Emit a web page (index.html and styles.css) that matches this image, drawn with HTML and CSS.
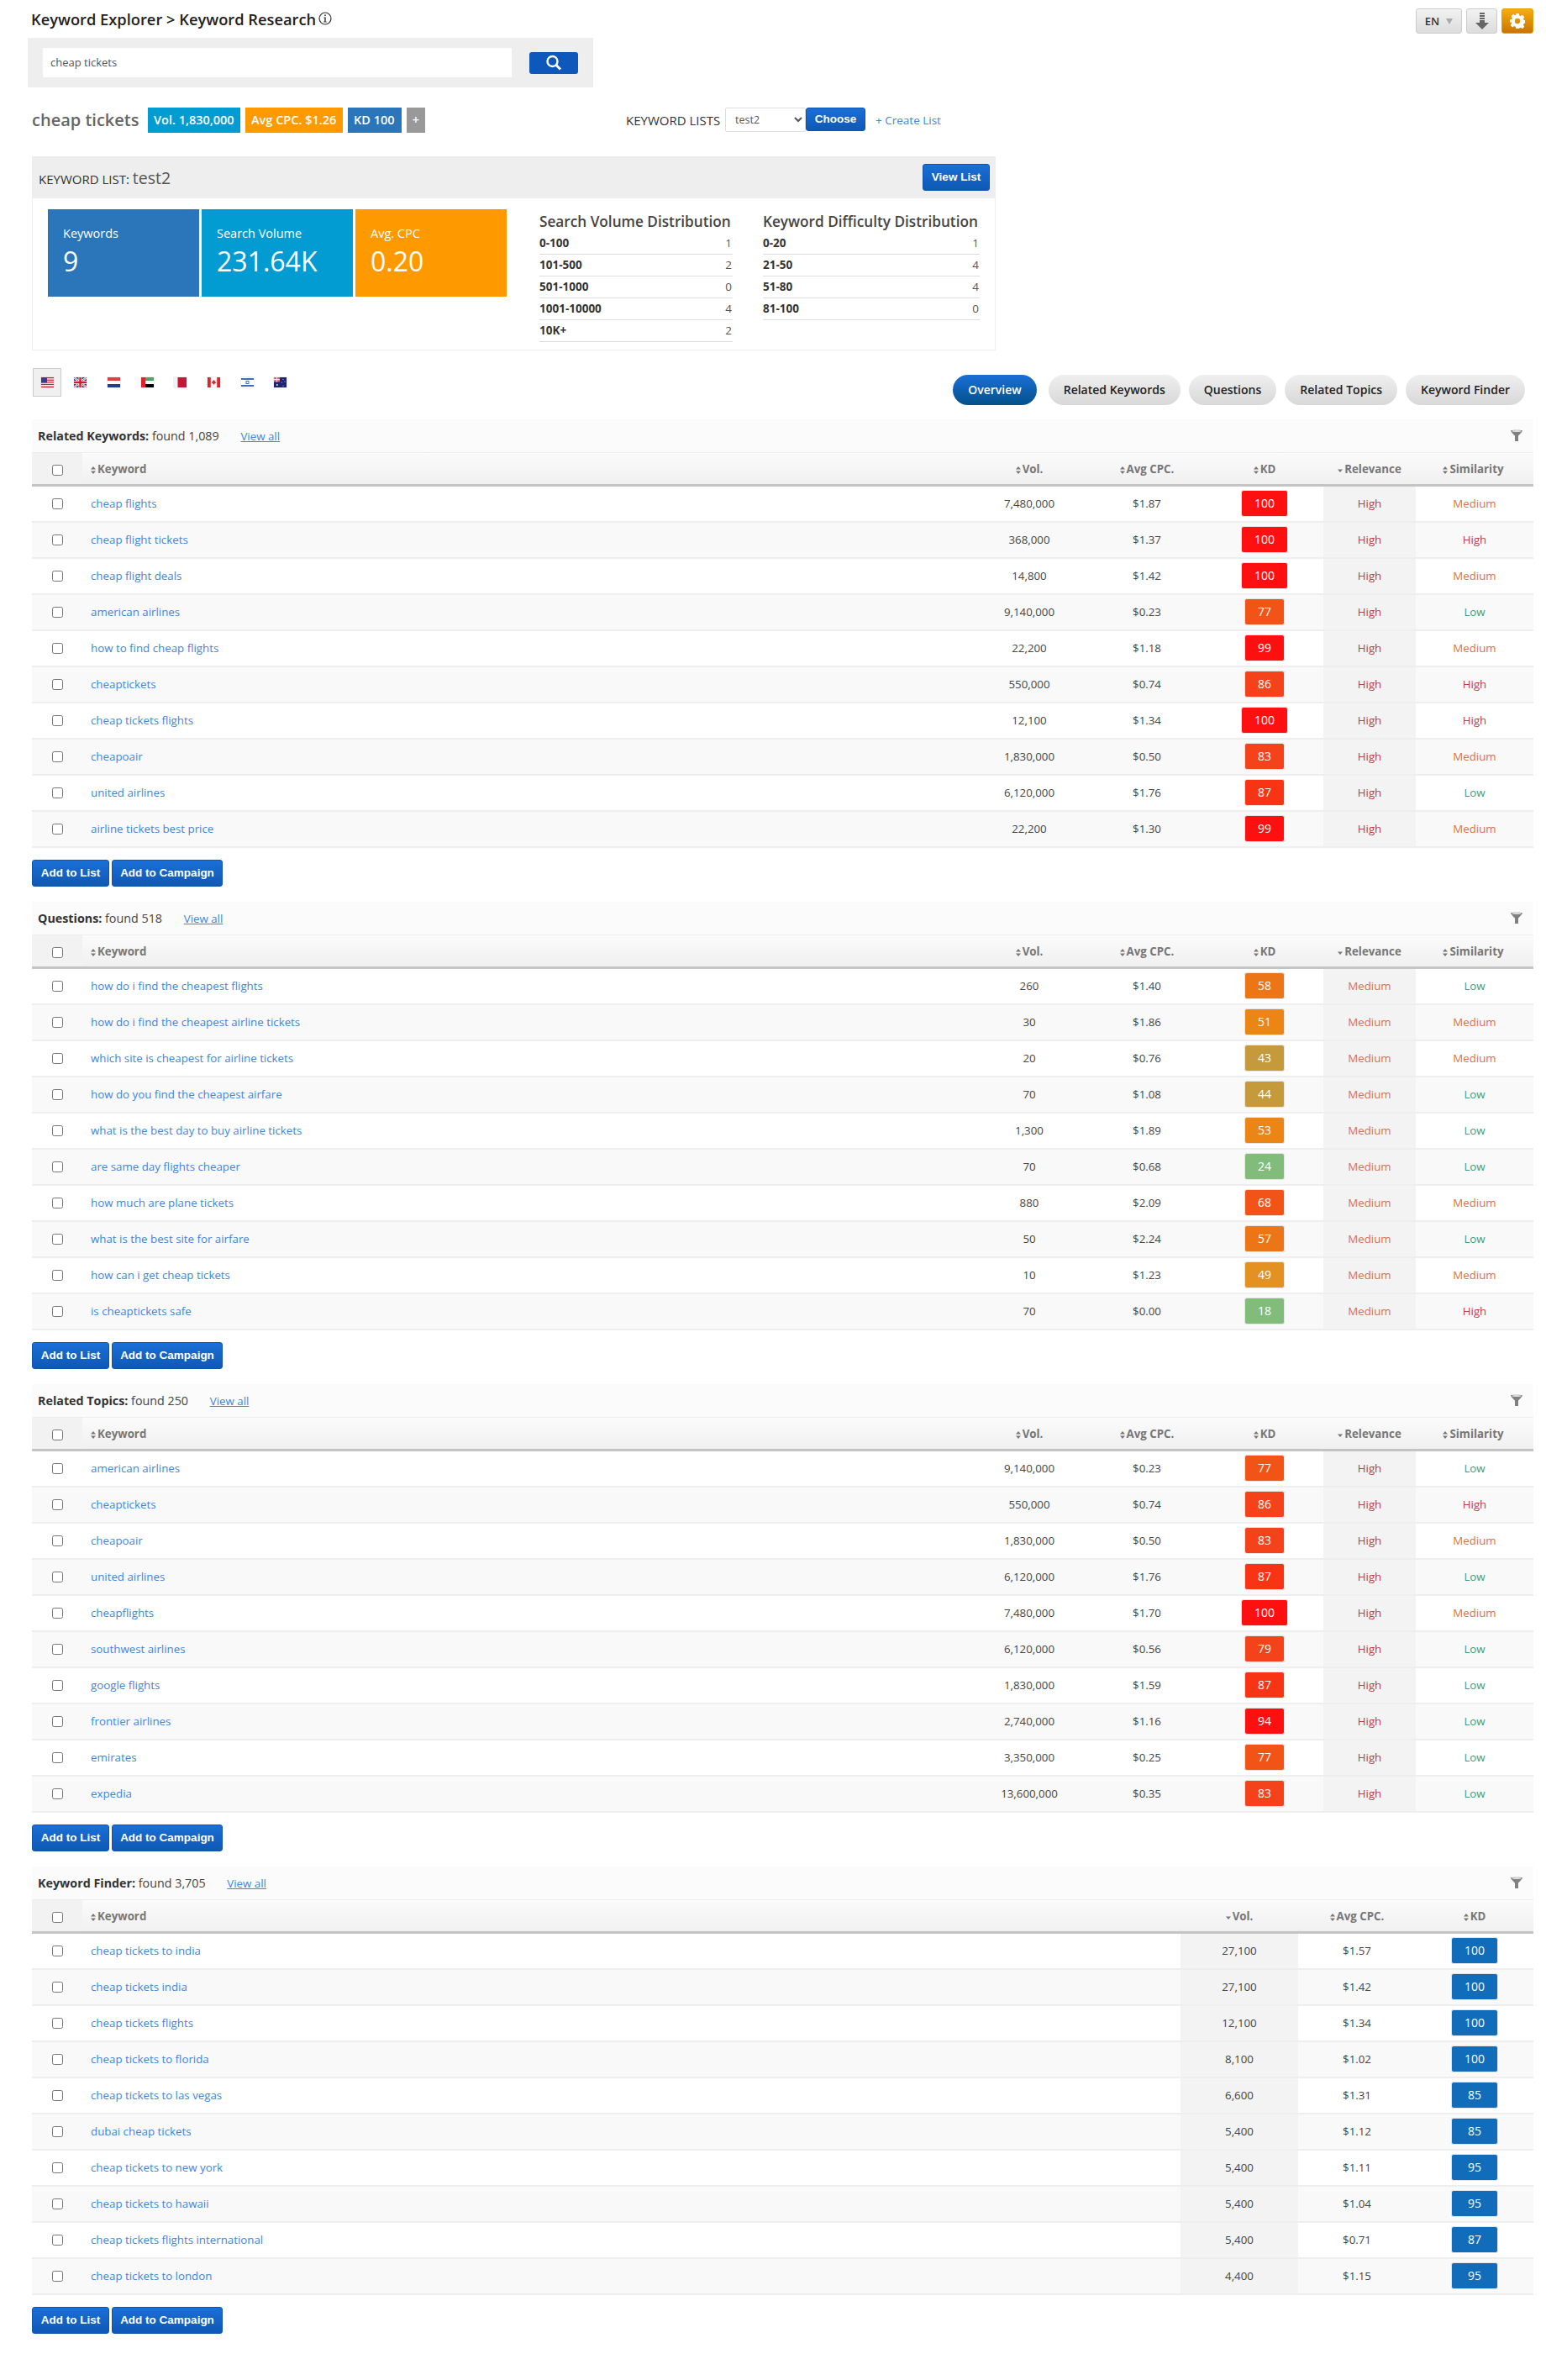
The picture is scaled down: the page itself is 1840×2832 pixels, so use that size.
FILE: index.html
```html
<!DOCTYPE html>
<html lang="en">
<head>
  <meta charset="UTF-8">
  <title>Keyword Research</title>
  <link rel="stylesheet" href="styles.css">
</head>
<body>
  <div class="page">
    <div class="topbar">
      <h1 class="page-title">Keyword Explorer &gt; Keyword Research
        <svg class="info-icon" viewBox="0 0 16 16" width="16" height="16"><circle cx="8" cy="8" r="7" fill="none" stroke="#333" stroke-width="1.2"/><rect x="7.2" y="3.4" width="1.6" height="1.6" fill="#333"/><path d="M6.4 6.6h2.3v5h1v1H6.2v-1h1.1v-4h-.9z" fill="#333"/></svg>
      </h1>
      <div class="top-actions">
        <button class="top-btn lang-btn">EN <span class="lang-caret"></span></button>
        <button class="top-btn icon-btn">
          <svg viewBox="0 0 18 22" width="18" height="22"><g fill="#666"><rect x="6" y="1" width="6" height="2"/><rect x="6" y="4" width="6" height="2"/><rect x="6" y="7" width="6" height="2"/><path d="M6 10h6v3h5l-8 8-8-8h5z"/></g></svg>
        </button>
        <button class="top-btn gear-btn">
          <svg viewBox="0 0 20 20" width="18" height="18"><path fill="#fff" fill-rule="evenodd" d="M8 0h4l.5 2.800 1.700.7 2.300-1.600 2.800 2.800-1.600 2.300.7 1.700 2.600.3v4l-2.600.5-.7 1.700 1.600 2.300-2.800 2.800-2.300-1.600-1.700.7L12 20H8l-.5-2.600-1.700-.7-2.300 1.600-2.800-2.800 1.600-2.300-.7-1.700L0 12V8l2.600-.3.7-1.700-1.600-2.300 2.800-2.800 2.300 1.600 1.700-.7zM10 6.500a3.500 3.500 0 1 0 0 7 3.500 3.500 0 0 0 0-7z"/></svg>
        </button>
      </div>
    </div>

    <div class="search-panel">
      <input class="search-input" type="text" value="cheap tickets">
      <button class="search-btn">
        <svg viewBox="0 0 20 20" width="20" height="20"><circle cx="8.500" cy="8" r="6" fill="none" stroke="#fff" stroke-width="2.400"/><path d="M13 12.500l5 5" stroke="#fff" stroke-width="3"/></svg>
      </button>
    </div>

    <div class="summary-row">
      <div class="summary-left">
        <span class="summary-term">cheap tickets</span>
        <span class="tag tag-vol">Vol. 1,830,000</span>
        <span class="tag tag-cpc">Avg CPC. $1.26</span>
        <span class="tag tag-kd">KD 100</span>
        <span class="tag tag-plus">+</span>
      </div>
      <div class="list-picker">
        <span class="list-label">KEYWORD LISTS</span>
        <select class="list-select"><option>test2</option></select>
        <button class="btn choose-btn">Choose</button>
        <a class="create-link">+ Create List</a>
      </div>
    </div>

    <div class="list-panel">
      <div class="list-head">
        <div class="list-title">KEYWORD LIST: <span class="list-name">test2</span></div>
        <button class="btn view-btn">View List</button>
      </div>
      <div class="list-body">
        <div class="stat stat-blue"><div class="stat-label">Keywords</div><div class="stat-value">9</div></div>
        <div class="stat stat-cyan"><div class="stat-label">Search Volume</div><div class="stat-value">231.64K</div></div>
        <div class="stat stat-orange"><div class="stat-label">Avg. CPC</div><div class="stat-value">0.20</div></div>
        <div class="dist dist-vol">
          <h3>Search Volume Distribution</h3>
          <div class="dist-row"><b>0-100</b><span>1</span></div>
          <div class="dist-row"><b>101-500</b><span>2</span></div>
          <div class="dist-row"><b>501-1000</b><span>0</span></div>
          <div class="dist-row"><b>1001-10000</b><span>4</span></div>
          <div class="dist-row"><b>10K+</b><span>2</span></div>
        </div>
        <div class="dist dist-kd">
          <h3>Keyword Difficulty Distribution</h3>
          <div class="dist-row"><b>0-20</b><span>1</span></div>
          <div class="dist-row"><b>21-50</b><span>4</span></div>
          <div class="dist-row"><b>51-80</b><span>4</span></div>
          <div class="dist-row"><b>81-100</b><span>0</span></div>
        </div>
      </div>
    </div>

    <div class="nav-row">
      <div class="flags">
        <span class="flag-item active"><svg viewBox="0 0 15 12" width="15" height="12"><rect width="15" height="12" fill="#fff"/><g fill="#c8202f"><rect width="15" height="1.300"/><rect y="2.600" width="15" height="1.300"/><rect y="5.200" width="15" height="1.300"/><rect y="7.800" width="15" height="1.300"/><rect y="10.700" width="15" height="1.300"/></g><rect width="7" height="6.500" fill="#3c3b8e"/></svg></span>
        <span class="flag-item"><svg viewBox="0 0 15 12" width="15" height="12"><rect width="15" height="12" fill="#2a3f86"/><path d="M0 0l15 12M15 0L0 12" stroke="#fff" stroke-width="2.400"/><path d="M0 0l15 12M15 0L0 12" stroke="#c8202f" stroke-width=".8"/><path d="M7.500 0v12M0 6h15" stroke="#fff" stroke-width="4"/><path d="M7.500 0v12M0 6h15" stroke="#c8202f" stroke-width="2.400"/></svg></span>
        <span class="flag-item"><svg viewBox="0 0 15 12" width="15" height="12"><rect width="15" height="4" fill="#d9413f"/><rect y="4" width="15" height="4" fill="#fff"/><rect y="8" width="15" height="4" fill="#1f3f8f"/></svg></span>
        <span class="flag-item"><svg viewBox="0 0 15 12" width="15" height="12"><rect width="15" height="4" fill="#4aa56b"/><rect y="4" width="15" height="4" fill="#fff"/><rect y="8" width="15" height="4" fill="#000"/><rect width="5" height="12" fill="#d9262c"/></svg></span>
        <span class="flag-item"><svg viewBox="0 0 15 12" width="15" height="12"><rect width="15" height="12" fill="#c2183a"/><rect width="4.500" height="12" fill="#f2f2f2"/></svg></span>
        <span class="flag-item"><svg viewBox="0 0 15 12" width="15" height="12"><rect width="15" height="12" fill="#fff"/><rect width="3.800" height="12" fill="#d9262c"/><rect x="11.200" width="3.800" height="12" fill="#d9262c"/><path d="M7.500 3l1 1.500 1-.5-.3 2 .9-.3-.3 1.300-1.800.8v1h-1v-1l-1.800-.8-.3-1.300.9.300-.3-2 1 .5z" fill="#d9262c"/></svg></span>
        <span class="flag-item"><svg viewBox="0 0 15 12" width="15" height="12"><rect width="15" height="12" fill="#fff"/><rect y="1" width="15" height="2" fill="#3d6fb5"/><rect y="9" width="15" height="2" fill="#3d6fb5"/><rect x="6" y="4.500" width="3" height="3" fill="none" stroke="#3d6fb5"/></svg></span>
        <span class="flag-item"><svg viewBox="0 0 15 12" width="15" height="12"><rect width="15" height="12" fill="#1d2470"/><rect width="7" height="5.500" fill="#c86b7d"/><path d="M3.500 0v5.500M0 2.700h7" stroke="#fff"/><g fill="#fff"><circle cx="3.800" cy="9" r=".9"/><circle cx="11" cy="2.500" r=".5"/><circle cx="13" cy="5" r=".5"/><circle cx="9.500" cy="6" r=".5"/><circle cx="11" cy="10" r=".5"/></g></svg></span>
      </div>
      <div class="tabs">
        <a class="tab active">Overview</a>
        <a class="tab">Related Keywords</a>
        <a class="tab">Questions</a>
        <a class="tab">Related Topics</a>
        <a class="tab">Keyword Finder</a>
      </div>
    </div>

    <div id="sections"></div>
  </div>
  <script src="script.js"></script>
</body>
</html>
```

FILE: styles.css
```css
* {
  box-sizing: border-box;
}

body {
  margin: 0;
  background: #fff;
  font-family: "Open Sans", sans-serif;
  font-size: 13.3px;
  color: #333;
}

button {
  font-family: inherit;
  cursor: pointer;
}

.page {
  padding: 10px 15px 0 38px;
}

.topbar {
  display: flex;
  justify-content: space-between;
  height: 30px;
}

.page-title {
  display: flex;
  align-items: center;
  gap: 3px;
  height: 24px;
  margin: 0 0 0 -1px;
  font-size: 18.300px;
  font-weight: 600;
  color: #222;
  white-space: nowrap;
}

.top-actions {
  display: flex;
  gap: 5px;
}

.top-btn {
  display: flex;
  align-items: center;
  justify-content: center;
  height: 30px;
  padding: 0;
  border: 1px solid #ccc;
  border-radius: 3px;
  background: linear-gradient(#f2f2f2, #dcdcdc);
}

.lang-btn {
  width: 55px;
  gap: 8px;
  font-size: 13px;
  font-weight: 600;
  color: #334;
}

.lang-caret {
  width: 0;
  height: 0;
  border-left: 4px solid transparent;
  border-right: 4px solid transparent;
  border-top: 7px solid #aaa;
}

.icon-btn {
  width: 37px;
}

.gear-btn {
  width: 38px;
  border-color: #e3a008;
  background: linear-gradient(#f5ae0a, #c97400);
}

.search-panel {
  display: flex;
  align-items: center;
  width: 673px;
  height: 59px;
  margin: 5px 0 0 -5px;
  padding-left: 18px;
  background: #eee;
}

.search-input {
  width: 558px;
  height: 35px;
  padding: 0 9px 2px;
  border: 0;
  background: #fff;
  font-family: inherit;
  font-size: 13px;
  color: #555;
}

.search-btn {
  display: flex;
  align-items: center;
  justify-content: center;
  width: 58px;
  height: 26px;
  margin-left: 21px;
  padding: 0;
  border: 0;
  border-radius: 3px;
  background: #0f58bb;
}

.summary-row {
  display: flex;
  height: 30px;
  margin-top: 24px;
}

.summary-left {
  display: flex;
  width: 707px;
}

.summary-term {
  width: 138px;
  font-size: 20px;
  font-weight: 600;
  line-height: 30px;
  color: #666;
  white-space: nowrap;
}

.tag {
  height: 30px;
  margin-right: 6px;
  padding: 0 7px;
  font-size: 14.500px;
  font-weight: 600;
  line-height: 30px;
  color: #fff;
  white-space: nowrap;
}

.tag-vol {
  width: 110px;
  background: #029cd3;
}

.tag-cpc {
  width: 116px;
  background: #ff9900;
}

.tag-kd {
  width: 64px;
  background: #2b75ba;
}

.tag-plus {
  width: 22px;
  background: #999;
  text-align: center;
  padding: 0;
}

.list-picker {
  display: flex;
  align-items: flex-start;
}

.list-label {
  width: 118px;
  font-size: 15px;
  line-height: 30px;
  color: #333;
  white-space: nowrap;
}

.list-select {
  width: 96px;
  height: 29px;
  padding-left: 7px;
  border: 1px solid #ddd;
  border-radius: 2px;
  background: #fff;
  font-family: inherit;
  font-size: 12.500px;
  color: #555;
}

.btn {
  border: 1px solid #0d55b0;
  border-radius: 3px;
  background: linear-gradient(#1a6fd6, #0f58b5);
  font-family: "Liberation Sans", sans-serif;
  font-size: 13.500px;
  font-weight: 700;
  color: #fff;
  padding: 0 0 1px;
}

.choose-btn {
  width: 71px;
  height: 28px;
}

.create-link {
  margin-left: 12px;
  font-size: 13.500px;
  line-height: 30px;
  color: #3d86dd;
  white-space: nowrap;
}

.list-panel {
  width: 1147px;
  height: 231px;
  margin-top: 28px;
  border: 1px solid #eee;
  border-top: 0;
}

.list-head {
  display: flex;
  align-items: center;
  justify-content: space-between;
  height: 50px;
  margin: 0 -1px;
  padding: 0 7px 0 8px;
  background: #eee;
}

.list-title {
  font-size: 15px;
  color: #333;
}

.list-name {
  font-size: 19.500px;
  color: #555;
}

.view-btn {
  width: 80px;
  height: 32px;
}

.list-body {
  display: flex;
  padding: 13px 0 0 18px;
}

.stat {
  width: 180px;
  height: 104px;
  margin-right: 3px;
  padding: 18px;
  color: #fff;
}

.stat-blue {
  background: #2b75ba;
}

.stat-cyan {
  background: #029cd3;
}

.stat-orange {
  background: #ff9900;
}

.stat-label {
  font-size: 14.500px;
  line-height: 21px;
}

.stat-value {
  font-size: 32px;
  line-height: 45px;
}

.dist-vol {
  width: 230px;
  margin-left: 36px;
}

.dist-kd {
  width: 258px;
  margin-left: 36px;
}

.dist h3 {
  margin: 4px 0 2px;
  font-size: 17.200px;
  font-weight: 600;
  line-height: 22px;
  color: #444;
  white-space: nowrap;
}

.dist-row {
  display: flex;
  justify-content: space-between;
  height: 26px;
  padding-right: 1px;
  border-bottom: 1px solid #ddd;
  font-size: 13.500px;
  line-height: 25px;
  color: #555;
}

.dist-row b {
  color: #333;
}

.nav-row {
  display: flex;
  justify-content: space-between;
  height: 44px;
  margin-top: 21px;
}

.flags {
  display: flex;
  align-items: flex-start;
  margin-left: 1px;
}

.flag-item {
  display: flex;
  align-items: center;
  justify-content: center;
  width: 34px;
  height: 34px;
  margin-right: 5.700px;
  border: 1px solid transparent;
}

.flag-item.active {
  border-color: #ccc;
  background: #f0f0f0;
}

.flag-item svg {
  box-shadow: 0 0 1px #999;
}

.tabs {
  display: flex;
  gap: 10px;
  height: 36px;
  margin: 8px 10px 0 0;
}

.tab {
  padding: 0 18px;
  border-radius: 18px;
  background: linear-gradient(#efefef, #d8d8d8);
  font-size: 14px;
  font-weight: 600;
  line-height: 36px;
  color: #222;
  white-space: nowrap;
}

.tab.active {
  margin-right: 4px;
  background: linear-gradient(#1a70d8, #03508a);
  color: #fff;
}

.section {
  margin-top: 17px;
}

.section + .section {
  margin-top: 18px;
}

.section-bar {
  display: flex;
  align-items: center;
  justify-content: space-between;
  height: 40px;
  padding: 0 13px 0 7px;
  border-bottom: 1px solid #eee;
  background: #fbfbfb;
  color: #444;
}

.section-name {
  font-size: 14.300px;
}

.section-name b {
  font-weight: 700;
  color: #333;
}

.view-all {
  margin-left: 22px;
  font-size: 13.300px;
  color: #3d86dd;
  text-decoration: underline;
}

.kw-table {
  width: 100%;
  border-collapse: separate;
  border-spacing: 0;
  table-layout: fixed;
}

.w60 {
  width: 60px;
}

.w110 {
  width: 110px;
}

.w140 {
  width: 140px;
}

.kw-table th {
  height: 40px;
  padding: 1px 0 0;
  border-bottom: 3px solid #c4c4c4;
  background: linear-gradient(#fbfbfb, #f0f0f0);
  font-size: 13.300px;
  font-weight: 700;
  color: #777;
  text-align: center;
}

.kw-table th.col-check {
  padding-top: 3px;
  background: #f2f2f2;
}

.kw-table th.col-keyword,
.kw-table td.col-keyword {
  padding-left: 10px;
  text-align: left;
}

.kw-table th.col-last {
  padding-right: 3px;
}

.kw-table td {
  height: 43px;
  padding: 0 0 1px;
  border-bottom: 2px solid #eee;
  text-align: center;
  color: #444;
}

.kw-table tbody tr:nth-child(even) {
  background: #f9f9f9;
}

.kw-table td.shaded {
  background: #f3f3f3;
}

.col-check input {
  display: block;
  width: 13px;
  height: 13px;
  margin: 0 auto;
}

.keyword-link {
  color: #3d86dd;
}

.sort {
  display: inline-block;
  width: 6px;
  height: 9px;
  margin-right: 2px;
  vertical-align: -1px;
}

.kd {
  display: inline-block;
  width: 48px;
  height: 32px;
  border: 1px solid #e4e4e4;
  border-radius: 3px;
  font-size: 14px;
  line-height: 30px;
  color: #fff;
  vertical-align: middle;
}

.kd.wide {
  width: 56px;
}

.kd.blue {
  width: 56px;
  background: #116db9;
}

.kw-table td.lvl-High {
  color: #b8404f;
}

.kw-table td.lvl-Medium {
  color: #d9704f;
}

.kw-table td.lvl-Low {
  color: #3a9d7e;
}

.section-actions {
  display: flex;
  gap: 3px;
  margin-top: 14px;
}

.add-list {
  width: 92px;
  height: 32px;
}

.add-campaign {
  width: 132px;
  height: 32px;
}
```

FILE: script.js
```js
const sections = [
  {
    name: "Related Keywords", found: "1,089",
    rows: [
      ["cheap flights", "7,480,000", "$1.87", 100, "High", "Medium"],
      ["cheap flight tickets", "368,000", "$1.37", 100, "High", "High"],
      ["cheap flight deals", "14,800", "$1.42", 100, "High", "Medium"],
      ["american airlines", "9,140,000", "$0.23", 77, "High", "Low"],
      ["how to find cheap flights", "22,200", "$1.18", 99, "High", "Medium"],
      ["cheaptickets", "550,000", "$0.74", 86, "High", "High"],
      ["cheap tickets flights", "12,100", "$1.34", 100, "High", "High"],
      ["cheapoair", "1,830,000", "$0.50", 83, "High", "Medium"],
      ["united airlines", "6,120,000", "$1.76", 87, "High", "Low"],
      ["airline tickets best price", "22,200", "$1.30", 99, "High", "Medium"]
    ]
  },
  {
    name: "Questions", found: "518",
    rows: [
      ["how do i find the cheapest flights", "260", "$1.40", 58, "Medium", "Low"],
      ["how do i find the cheapest airline tickets", "30", "$1.86", 51, "Medium", "Medium"],
      ["which site is cheapest for airline tickets", "20", "$0.76", 43, "Medium", "Medium"],
      ["how do you find the cheapest airfare", "70", "$1.08", 44, "Medium", "Low"],
      ["what is the best day to buy airline tickets", "1,300", "$1.89", 53, "Medium", "Low"],
      ["are same day flights cheaper", "70", "$0.68", 24, "Medium", "Low"],
      ["how much are plane tickets", "880", "$2.09", 68, "Medium", "Medium"],
      ["what is the best site for airfare", "50", "$2.24", 57, "Medium", "Low"],
      ["how can i get cheap tickets", "10", "$1.23", 49, "Medium", "Medium"],
      ["is cheaptickets safe", "70", "$0.00", 18, "Medium", "High"]
    ]
  },
  {
    name: "Related Topics", found: "250",
    rows: [
      ["american airlines", "9,140,000", "$0.23", 77, "High", "Low"],
      ["cheaptickets", "550,000", "$0.74", 86, "High", "High"],
      ["cheapoair", "1,830,000", "$0.50", 83, "High", "Medium"],
      ["united airlines", "6,120,000", "$1.76", 87, "High", "Low"],
      ["cheapflights", "7,480,000", "$1.70", 100, "High", "Medium"],
      ["southwest airlines", "6,120,000", "$0.56", 79, "High", "Low"],
      ["google flights", "1,830,000", "$1.59", 87, "High", "Low"],
      ["frontier airlines", "2,740,000", "$1.16", 94, "High", "Low"],
      ["emirates", "3,350,000", "$0.25", 77, "High", "Low"],
      ["expedia", "13,600,000", "$0.35", 83, "High", "Low"]
    ]
  },
  {
    name: "Keyword Finder", found: "3,705", finder: true,
    rows: [
      ["cheap tickets to india", "27,100", "$1.57", 100],
      ["cheap tickets india", "27,100", "$1.42", 100],
      ["cheap tickets flights", "12,100", "$1.34", 100],
      ["cheap tickets to florida", "8,100", "$1.02", 100],
      ["cheap tickets to las vegas", "6,600", "$1.31", 85],
      ["dubai cheap tickets", "5,400", "$1.12", 85],
      ["cheap tickets to new york", "5,400", "$1.11", 95],
      ["cheap tickets to hawaii", "5,400", "$1.04", 95],
      ["cheap tickets flights international", "5,400", "$0.71", 87],
      ["cheap tickets to london", "4,400", "$1.15", 95]
    ]
  }
];

const sortBoth = '<svg class="sort" viewBox="0 0 6 9"><path d="M3 0l3 3.500H0zM3 9L0 5.500h6z" fill="#777"/></svg>';
const sortDown = '<svg class="sort" viewBox="0 0 6 9"><path d="M3 7L0 3.500h6z" fill="#777"/></svg>';
const funnel = '<svg viewBox="0 0 14 15" width="14" height="15"><path d="M0 1.500C0 .5 14 .5 14 1.500c0 1-4.500 5.500-5 6v6.500H5V7.500C4.500 7 0 2.500 0 1.500z" fill="#808080"/><ellipse cx="7" cy="2" rx="5.500" ry="1" fill="#ddd"/></svg>';

function kdColor(kd) {
  if (kd >= 94) return "#ff1010";
  if (kd >= 87) return "#f93414";
  if (kd >= 79) return "#f4431a";
  if (kd >= 68) return "#f25417";
  if (kd >= 55) return "#ec7515";
  if (kd >= 50) return "#ea8516";
  if (kd >= 45) return "#e39120";
  if (kd >= 30) return "#c49a3b";
  return "#82bc7b";
}

function buildRow(row, finder) {
  const [keyword, vol, cpc, kd, relevance, similarity] = row;
  const check = '<td class="col-check"><input type="checkbox"></td>';
  const link = `<td class="col-keyword"><a class="keyword-link">${keyword}</a></td>`;
  if (finder) {
    return `<tr>${check}${link}<td class="shaded">${vol}</td><td>${cpc}</td><td><span class="kd blue">${kd}</span></td></tr>`;
  }
  return `<tr>${check}${link}<td>${vol}</td><td>${cpc}</td>
    <td><span class="kd ${kd === 100 ? "wide" : ""}" style="background:${kdColor(kd)}">${kd}</span></td>
    <td class="shaded lvl-${relevance}">${relevance}</td><td class="lvl-${similarity}">${similarity}</td></tr>`;
}

function buildSection(section) {
  const finder = section.finder;
  const cols = finder
    ? '<col class="w60"><col><col class="w140"><col class="w140"><col class="w140">'
    : '<col class="w60"><col><col class="w140"><col class="w140"><col class="w140"><col class="w110"><col class="w140">';
  const head = finder
    ? `<th>${sortDown}Vol.</th><th>${sortBoth}Avg CPC.</th><th>${sortBoth}KD</th>`
    : `<th>${sortBoth}Vol.</th><th>${sortBoth}Avg CPC.</th><th>${sortBoth}KD</th><th>${sortDown}Relevance</th><th class="col-last">${sortBoth}Similarity</th>`;
  return `
    <div class="section">
      <div class="section-bar">
        <div class="section-name"><b>${section.name}:</b> found ${section.found} <a class="view-all">View all</a></div>
        ${funnel}
      </div>
      <table class="kw-table">
        <colgroup>${cols}</colgroup>
        <thead><tr><th class="col-check"><input type="checkbox"></th><th class="col-keyword">${sortBoth}Keyword</th>${head}</tr></thead>
        <tbody>${section.rows.map(row => buildRow(row, finder)).join("")}</tbody>
      </table>
      <div class="section-actions">
        <button class="btn add-list">Add to List</button>
        <button class="btn add-campaign">Add to Campaign</button>
      </div>
    </div>`;
}

document.getElementById("sections").innerHTML = sections.map(buildSection).join("");
```
